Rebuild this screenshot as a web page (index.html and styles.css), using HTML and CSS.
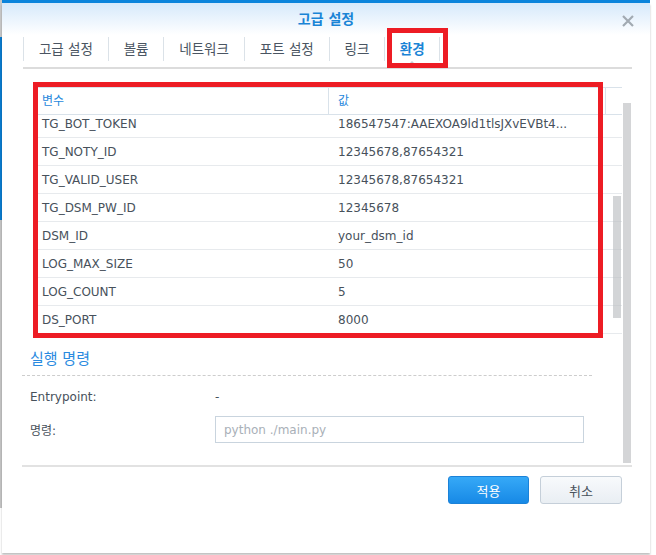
FILE: index.html
```html
<!DOCTYPE html>
<html>
<head>
    <meta charset="utf-8">
    <title>고급 설정</title>
    <link rel="stylesheet" href="styles.css">
</head>
<body>
    <div class="topbar"></div>

    <div class="dialog">
        <div class="titlebar">
            <span class="title">고급 설정</span>
            <svg class="close" width="12" height="12" viewBox="0 0 12 12">
                <path d="M1 1 L11 11 M11 1 L1 11" stroke="#a2aab2" stroke-width="2.2" fill="none"/>
            </svg>
        </div>

        <div class="tabs">
            <div class="tab">고급 설정</div>
            <div class="tab">볼륨</div>
            <div class="tab">네트워크</div>
            <div class="tab">포트 설정</div>
            <div class="tab">링크</div>
            <div class="tab active">환경<span class="caret"></span><span class="mark mark-tab"></span></div>
        </div>

        <div class="panel">
            <div class="grid">
                <div class="grid-head">
                    <div class="c1">변수</div>
                    <div class="c2">값</div>
                    <div class="c3"></div>
                </div>
                <div class="grid-body">
                    <div class="grid-rows">
                        <div class="row"><div class="c1">TG_BOT_TOKEN</div><div class="c2">186547547:AAEXOA9ld1tlsJXvEVBt4...</div></div>
                        <div class="row"><div class="c1">TG_NOTY_ID</div><div class="c2">12345678,87654321</div></div>
                        <div class="row"><div class="c1">TG_VALID_USER</div><div class="c2">12345678,87654321</div></div>
                        <div class="row"><div class="c1">TG_DSM_PW_ID</div><div class="c2">12345678</div></div>
                        <div class="row"><div class="c1">DSM_ID</div><div class="c2">your_dsm_id</div></div>
                        <div class="row"><div class="c1">LOG_MAX_SIZE</div><div class="c2">50</div></div>
                        <div class="row"><div class="c1">LOG_COUNT</div><div class="c2">5</div></div>
                        <div class="row"><div class="c1">DS_PORT</div><div class="c2">8000</div></div>
                    </div>
                    <div class="grid-thumb"></div>
                </div>
                <span class="mark mark-grid"></span>
            </div>

            <div class="section">실행 명령</div>
            <div class="field field-first">
                <label>Entrypoint:</label>
                <span>-</span>
            </div>
            <div class="field">
                <label>명령:</label>
                <input type="text" placeholder="python ./main.py">
            </div>

            <div class="panel-thumb"></div>
        </div>

        <div class="footer">
            <button type="button" class="btn btn-primary">적용</button>
            <button type="button" class="btn">취소</button>
        </div>
    </div>
</body>
</html>
```

FILE: styles.css
```css
html, body {
    height: 100%;
}

body {
    margin: 0;
    font-family: "DejaVu Sans", "Noto Sans CJK KR", sans-serif;
    font-size: 12px;
    color: #47515b;
    /* strip of the window behind the dialog */
    background: #fff linear-gradient(to bottom, #c8c8c8 37px, #0a7bcf 37px, #0a7bcf 220px, #c4c4c4 220px, #c4c4c4 508px, #fff 508px) no-repeat left top / 2px 100%;
}

.topbar {
    margin-left: 2px;
    width: 648px;
    height: 3px;
    background: #0b84dc;
}

.dialog {
    margin-left: 2px;
    width: 648px;
    height: 550px;
    background-color: #fff;
    box-shadow: 0 2px 2px rgba(0, 0, 0, 0.25);
}

/* title */
.titlebar {
    position: relative;
    height: 32px;
    background: linear-gradient(#d6e9fb, #fff);
    text-align: center;
}

.title {
    font-size: 14px;
    font-weight: bold;
    line-height: 32px;
    color: #1a84d6;
}

.close {
    position: absolute;
    top: 12px;
    right: 16px;
}

/* tabs */
.tabs {
    display: flex;
    align-items: flex-start;
    height: 34px;
    margin: 0 18px 0 21px;
    padding-top: 2px;
    border-bottom: 2px solid #dcdcdc;
    box-sizing: border-box;
}

.tab {
    position: relative;
    height: 24px;
    line-height: 24px;
    padding: 0 14.9px;
    border-left: 1px solid #dbe2e8;
    font-size: 13.5px;
    color: #4a5562;
}

.tab.active {
    padding: 0 14.5px;
    color: #1a84d6;
    font-weight: bold;
    border-right: 1px solid #dbe2e8;
}

.caret {
    position: absolute;
    left: 50%;
    bottom: -3px;
    margin-left: -3px;
    border: 3px solid transparent;
    border-bottom-color: #c3cad2;
    border-top: 0;
}

/* red annotation boxes */
.mark {
    position: absolute;
    border: 5px solid #ed1c24;
    box-sizing: border-box;
}

.mark-tab {
    left: 2px;
    top: -9px;
    width: 61px;
    height: 40px;
}

.mark-grid {
    left: -1px;
    top: -5px;
    width: 570px;
    height: 256px;
}

/* scroll panel */
.panel {
    position: relative;
    height: 398px;
    margin: 0 18px 0 20px;
    padding-top: 18px;
    border-bottom: 2px solid #e2e2e2;
    box-sizing: border-box;
}

.panel-thumb {
    position: absolute;
    right: 1px;
    top: 34px;
    bottom: 2px;
    width: 8px;
    background-color: #d4d5d7;
}

/* grid */
.grid {
    position: relative;
    margin: 0 10px 0 12px;
}

.grid-head {
    display: flex;
    height: 28px;
    line-height: 26px;
    border-top: 1px solid #d9e2ea;
    border-bottom: 1px solid #d9e2ea;
    box-sizing: border-box;
    color: #1f88dc;
}

.c1 {
    width: 294px;
    padding-left: 8px;
    box-sizing: border-box;
}

.c2 {
    width: 277px;
    padding-left: 10px;
    box-sizing: border-box;
}

.grid-head .c2 {
    padding-left: 9px;
    border-left: 1px solid #d9e2ea;
}

.grid-head .c3 {
    flex: 1;
    border-left: 1px solid #d9e2ea;
}

.grid-body {
    position: relative;
    height: 219px;
    overflow: hidden;
}

.grid-rows {
    margin-top: -5px;
}

.row {
    display: flex;
    height: 28px;
    line-height: 28px;
    border-bottom: 1px solid #e7eaed;
    box-sizing: border-box;
}

.row .c2 {
    white-space: nowrap;
}

.grid-thumb {
    position: absolute;
    right: 1px;
    top: 81px;
    width: 8px;
    height: 122px;
    background-color: rgba(188, 190, 194, 0.65);
}

/* command section */
.section {
    margin: 14px 40px 0 0;
    padding: 0 0 5px 8px;
    font-size: 15px;
    line-height: 22px;
    color: #2a8ae0;
    border-bottom: 1px dashed #cdcdcd;
}

.field {
    display: flex;
    align-items: center;
    margin-top: 6px;
    padding-left: 8px;
    height: 27px;
}

.field-first {
    margin-top: 8px;
    height: 26px;
}

.field label {
    width: 185px;
}

.field input {
    width: 369px;
    height: 27px;
    padding: 0 8px;
    border: 1px solid #c9d4de;
    box-sizing: border-box;
    font-family: "DejaVu Sans", sans-serif;
    font-size: 12px;
    color: #47515b;
    outline: none;
}

.field input::placeholder {
    color: #a9b0b8;
}

/* buttons */
.footer {
    display: flex;
    justify-content: flex-end;
    gap: 11px;
    padding: 9px 28px 0 0;
}

.btn {
    width: 82px;
    height: 28px;
    border: 1px solid #c5cfd9;
    border-radius: 3px;
    background: linear-gradient(#f8fafc, #e9eef3);
    font-family: "Noto Sans CJK KR", sans-serif;
    font-size: 13px;
    color: #47515b;
}

.btn-primary {
    width: 81px;
    border-color: #1b82d8;
    background: linear-gradient(#36a9f7, #1789e6);
    color: #fff;
}
```
